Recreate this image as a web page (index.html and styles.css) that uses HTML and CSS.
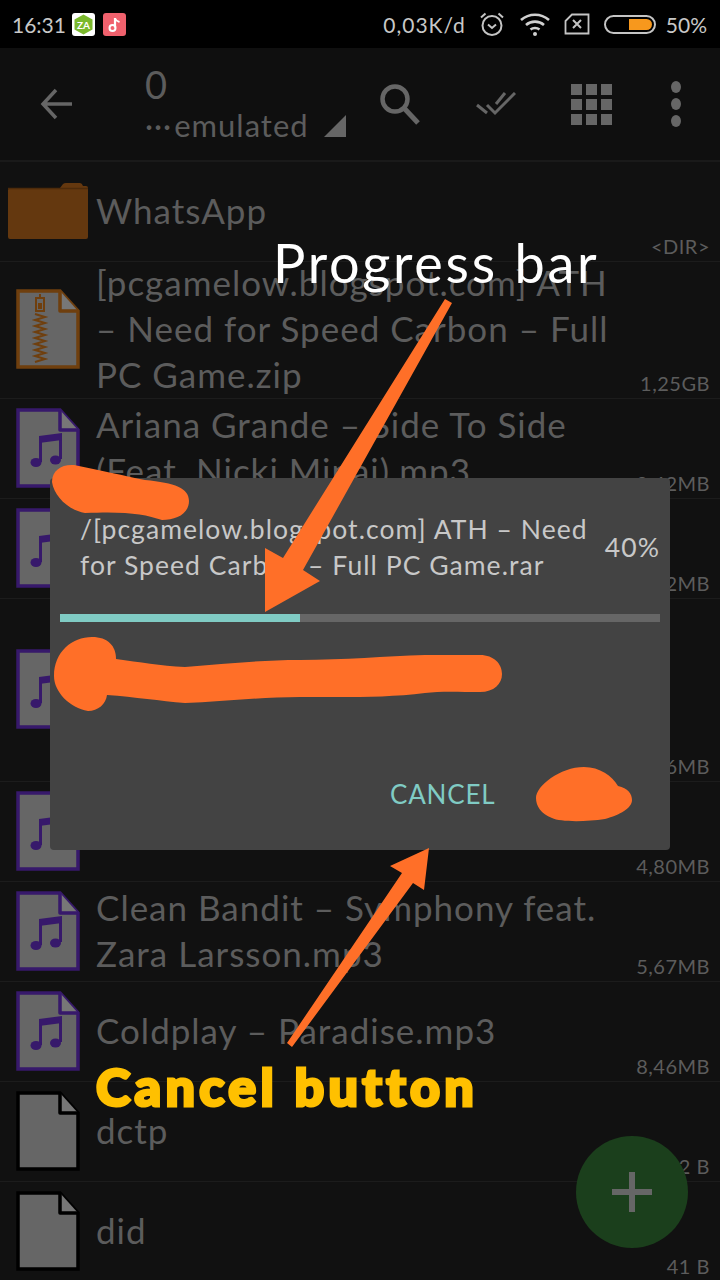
FILE: index.html
```html
<!DOCTYPE html>
<html>

<head>
    <meta charset="UTF-8">
    <title>Files</title>
    <link rel="stylesheet" href="styles.css">
</head>

<body>
    <svg class="defs" width="0" height="0">
        <symbol id="sheet" viewBox="0 0 64 80">
            <path d="M2 2H44L62 22V78H2Z" fill="#666" stroke="currentColor" stroke-width="3.5" />
            <path d="M44 2V22H62" fill="#777" stroke="currentColor" stroke-width="3.5" stroke-linejoin="round" />
        </symbol>
        <symbol id="note" viewBox="0 0 64 80">
            <use href="#sheet" />
            <path d="M24.500 31V54M44.500 29V51" fill="none" stroke="currentColor" stroke-width="3" />
            <path d="M23 28L46 25V32L23 35Z" fill="currentColor" />
            <ellipse cx="20" cy="54.500" rx="5.500" ry="4.500" fill="currentColor" />
            <ellipse cx="39.500" cy="52" rx="5.500" ry="4.500" fill="currentColor" />
        </symbol>
    </svg>

    <header class="status">
        <div class="status-left">
            <span>16:31</span>
            <svg class="app-icon" viewBox="0 0 23 23">
                <rect width="23" height="23" rx="3" fill="#fff" />
                <path d="M11.500 1.500L20.500 6.500V16.500L11.500 21.500L2.500 16.500V6.500Z" fill="#7ab82c" />
                <text x="11.500" y="15.500" class="app-mark">ZA</text>
            </svg>
            <svg class="app-icon" viewBox="0 0 23 23">
                <rect width="23" height="23" rx="3" fill="#f0616d" />
                <path d="M12 5V14.500" stroke="#fff" stroke-width="2.200" fill="none" />
                <path d="M12 5.500C13 8 15 8.500 16.500 9" stroke="#fff" stroke-width="2" fill="none" />
                <circle cx="9.500" cy="15" r="3" fill="none" stroke="#fff" stroke-width="2" />
            </svg>
        </div>
        <div class="status-right">
            <span class="speed">0,03K/d</span>
            <svg class="st-alarm" width="26" height="26" viewBox="0 0 26 26" fill="none" stroke="#c4c4c4" stroke-width="2">
                <circle cx="13" cy="14.500" r="9.500" />
                <path d="M9 13.500L13 17L17 13.500" />
                <path d="M2 6.500L6.500 2.500M24 6.500L19.500 2.500" />
            </svg>
            <svg class="st-wifi" width="32" height="26" viewBox="0 0 32 26" fill="none" stroke="#d0d0d0" stroke-width="2.600">
                <path d="M2 9C10 2 22 2 30 9" />
                <path d="M7 14C12 9.500 20 9.500 25 14" />
                <path d="M11.500 18.500C14 16.500 18 16.500 20.500 18.500" />
                <circle cx="16" cy="23" r="2" fill="#d0d0d0" stroke="none" />
            </svg>
            <svg class="st-sim" width="26" height="22" viewBox="0 0 26 22" fill="none" stroke="#c4c4c4" stroke-width="1.800">
                <path d="M1.500 8L8 1.500H24.500V20.500H1.500Z" />
                <path d="M9 7L17 15M17 7L9 15" stroke-width="2" />
            </svg>
            <div class="battery"><div class="battery-level"></div></div>
            <span>50%</span>
        </div>
    </header>

    <nav class="toolbar">
        <div class="tool tool-back">
            <svg width="32" height="32" viewBox="0 0 32 32" fill="none" stroke="#666" stroke-width="3.500">
                <path d="M32 16H3M16 2L3 16L16 30" />
            </svg>
        </div>
        <div class="path">
            <div class="path-count">0</div>
            <div class="path-name">
                <span class="path-dots">···</span>emulated
                <svg class="path-arrow" width="22" height="22" viewBox="0 0 22 22">
                    <path d="M22 0V22H0Z" fill="#666" />
                </svg>
            </div>
        </div>
        <div class="tool">
            <svg width="42" height="42" viewBox="0 0 42 42" fill="none" stroke="#666">
                <circle cx="16" cy="16" r="12.500" stroke-width="4.500" />
                <path d="M25 25L39 40" stroke-width="5" />
            </svg>
        </div>
        <div class="tool">
            <svg width="40" height="24" viewBox="0 0 40 24" fill="none" stroke="#666" stroke-width="3">
                <path d="M1 13L11 21" />
                <path d="M11 13L19 21L39 1" />
                <path d="M20 12L29 1" />
            </svg>
        </div>
        <div class="tool">
            <div class="grid-icon">
                <i></i><i></i><i></i><i></i><i></i><i></i><i></i><i></i><i></i>
            </div>
        </div>
        <div class="tool tool-more">
            <div class="dots"><i></i><i></i><i></i></div>
        </div>
    </nav>

    <main class="list">
        <div class="row">
            <div class="thumb">
                <svg width="80" height="58" viewBox="0 0 80 58">
                    <path d="M0 8Q0 6 2 6H52L55 2Q56 1 58 1H72Q74 1 75 4H78Q80 4 80 6V55Q80 57 78 57H2Q0 57 0 55Z" fill="#64380f" />
                    <path d="M0 6.500H80" stroke="#4d2b0b" stroke-width="1.500" />
                </svg>
            </div>
            <div class="name">WhatsApp</div>
            <div class="size">&lt;DIR&gt;</div>
        </div>
        <div class="row row-zip">
            <div class="thumb thumb-zip">
                <svg width="64" height="80" viewBox="0 0 64 80">
                    <use href="#sheet" />
                    <path d="M20 9H28V22H20Z" fill="none" stroke="currentColor" stroke-width="2" />
                    <path d="M22 14H26V20H22Z" fill="currentColor" />
                    <path d="M24 5V9M19 25L29 28L19 31L29 34L19 37L29 40L19 43L29 46L19 49L29 52L19 55L29 58L19 61L29 64L19 67L29 70L19 73" fill="none" stroke="currentColor" stroke-width="2" />
                </svg>
            </div>
            <div class="name">[pcgamelow.blogspot.com] ATH<br>– Need for Speed Carbon – Full<br>PC Game.zip</div>
            <div class="size">1,25GB</div>
        </div>
        <div class="row">
            <div class="thumb thumb-music"><svg width="64" height="80"><use href="#note" /></svg></div>
            <div class="name">Ariana Grande – Side To Side<br>(Feat. Nicki Minaj).mp3</div>
            <div class="size">9,42MB</div>
        </div>
        <div class="row">
            <div class="thumb thumb-music"><svg width="64" height="80"><use href="#note" /></svg></div>
            <div class="name"></div>
            <div class="size">3,32MB</div>
        </div>
        <div class="row row-tall">
            <div class="thumb thumb-music"><svg width="64" height="80"><use href="#note" /></svg></div>
            <div class="name"></div>
            <div class="size">7,16MB</div>
        </div>
        <div class="row">
            <div class="thumb thumb-music"><svg width="64" height="80"><use href="#note" /></svg></div>
            <div class="name"></div>
            <div class="size">4,80MB</div>
        </div>
        <div class="row">
            <div class="thumb thumb-music"><svg width="64" height="80"><use href="#note" /></svg></div>
            <div class="name">Clean Bandit – Symphony feat.<br>Zara Larsson.mp3</div>
            <div class="size">5,67MB</div>
        </div>
        <div class="row">
            <div class="thumb thumb-music"><svg width="64" height="80"><use href="#note" /></svg></div>
            <div class="name">Coldplay – Paradise.mp3</div>
            <div class="size">8,46MB</div>
        </div>
        <div class="row">
            <div class="thumb thumb-file"><svg width="64" height="80"><use href="#sheet" /></svg></div>
            <div class="name">dctp</div>
            <div class="size">42 B</div>
        </div>
        <div class="row">
            <div class="thumb thumb-file"><svg width="64" height="80"><use href="#sheet" /></svg></div>
            <div class="name">did</div>
            <div class="size">41 B</div>
        </div>
    </main>

    <div class="fab"><div class="fab-plus"></div></div>

    <section class="dialog">
        <div class="dialog-head">
            <div class="dialog-file">/[pcgamelow.blogspot.com] ATH – Need<br>for Speed Carbon – Full PC Game.rar</div>
            <div class="dialog-pct">40%</div>
        </div>
        <div class="bar"><div class="bar-fill" style="width: 40%"></div></div>
        <div class="dialog-actions"><span class="cancel">CANCEL</span></div>
    </section>

    <svg class="marks" width="720" height="1280" viewBox="0 0 720 1280">
        <path d="M52 482C52 470 62 464 74 465C100 470 125 476 145 480C175 483 189 488 189 501C189 514 176 520 162 520C145 514 125 511 85 513C68 510 54 496 52 482Z" />
        <path d="M54 676C54 652 72 637 92 637C108 637 116 646 116 659C140 662 160 666 185 667C225 664 260 660 300 660C345 660 385 656 425 655H480C494 655 502 664 502 674C502 684 494 692 480 692C460 692 440 691 425 693C385 698 345 697 300 697C260 697 220 702 185 703C160 701 135 697 107 695C106 704 98 711 88 711C70 708 54 692 54 676Z" />
        <path d="M536 798C536 786 560 767 584 767C600 767 612 776 618 786C628 788 632 794 632 800C632 808 620 815 605 819C585 822 560 822 552 818C541 814 536 806 536 798Z" />
        <path d="M445 299L452 303L303 570L320 581L265 612L265 548L283 558Z" />
        <path d="M287 1043L292 1047L413 883L424 890L429 848L390 866L402 873Z" />
    </svg>
    <div class="label label-progress">Progress bar</div>
    <div class="label label-cancel">Cancel button</div>
</body>

</html>
```

FILE: styles.css
```css
html,
body {
    margin: 0;
    height: 1280px;
    overflow: hidden;
    background-color: #111;
}

body {
    position: relative;
    font-family: "Lato", "Noto Sans", sans-serif;
    color: #5c5c5c;
}

.defs {
    position: absolute;
}

/* status bar */
.status {
    height: 48px;
    padding: 0 13px 0 12px;
    box-sizing: border-box;
    display: flex;
    align-items: center;
    justify-content: space-between;
    background: #000;
    color: #c8c8c8;
    font-size: 21px;
}

.status-left {
    display: flex;
    align-items: center;
}

.status-left span {
    width: 60px;
}

.app-icon {
    width: 23px;
    height: 23px;
    margin-right: 8px;
}

.app-mark {
    font-size: 10px;
    font-weight: 700;
    fill: #fff;
    text-anchor: middle;
}

.status-right {
    display: flex;
    align-items: center;
}

.speed {
    letter-spacing: 1px;
}

.st-alarm {
    margin-left: 13px;
}

.st-wifi {
    margin-left: 14px;
}

.st-sim {
    margin-left: 13px;
}

.battery {
    width: 52px;
    height: 19px;
    margin: 0 10px 0 14px;
    padding: 2px;
    box-sizing: border-box;
    display: flex;
    justify-content: flex-end;
    border: 2px solid #c4c4c4;
    border-radius: 10px;
}

.battery-level {
    width: 23px;
    background: #f7981d;
    border-radius: 0 6px 6px 0;
}

/* toolbar */
.toolbar {
    height: 112px;
    display: flex;
    align-items: center;
    background: #0f0f0f;
    border-bottom: 2px solid #1a1a1a;
}

.tool {
    width: 96px;
    display: flex;
    justify-content: center;
}

.tool-back {
    width: 112px;
}

.tool-more {
    width: 72px;
}

.path {
    width: 240px;
    padding-left: 33px;
    box-sizing: border-box;
    margin-top: -4px;
}

.path-count {
    font-size: 38px;
    line-height: 46px;
}

.path-name {
    font-size: 31px;
    line-height: 36px;
    white-space: nowrap;
    letter-spacing: 1px;
}

.path-dots {
    margin-right: 2px;
}

.path-arrow {
    margin-left: 6px;
}

.grid-icon {
    display: grid;
    grid-template-columns: repeat(3, 11px);
    grid-auto-rows: 11px;
    gap: 4px;
    margin-left: -1px;
}

.grid-icon i {
    background: #666;
}

.dots {
    display: flex;
    flex-direction: column;
    gap: 5px;
}

.dots i {
    width: 10px;
    height: 12px;
    border-radius: 50%;
    background: #666;
}

/* file list */
.list {
    display: flex;
    flex-direction: column;
}

.row {
    height: 100px;
    flex: none;
    box-sizing: border-box;
    display: grid;
    grid-template-columns: 96px 1fr auto;
    align-items: center;
    border-bottom: 1px solid #1c1c1c;
}

.row-zip {
    height: 137px;
}

.row-tall {
    height: 183px;
}

.thumb {
    display: flex;
    justify-content: center;
    margin-top: -2px;
    color: #000;
}

.thumb svg {
    display: block;
}

.thumb-zip {
    color: #6f3f0e;
}

.thumb-music {
    color: #37196b;
}

.name {
    font-size: 35px;
    line-height: 46px;
    letter-spacing: 1px;
    white-space: nowrap;
    margin-top: -4px;
    min-width: 0;
}

.size {
    align-self: end;
    font-size: 20px;
    line-height: 24px;
    letter-spacing: 0.5px;
    padding: 0 10px 3px 0;
}

/* floating button */
.fab {
    position: absolute;
    left: 576px;
    top: 1136px;
    width: 112px;
    height: 112px;
    display: flex;
    align-items: center;
    justify-content: center;
    border-radius: 50%;
    background: #1b3f1c;
}

.fab-plus {
    width: 40px;
    height: 40px;
    background:
        linear-gradient(#666, #666) center / 100% 6px no-repeat,
        linear-gradient(#666, #666) center / 6px 100% no-repeat;
}

/* dialog */
.dialog {
    position: absolute;
    left: 50px;
    top: 478px;
    width: 620px;
    height: 372px;
    padding: 33px 10px 0;
    box-sizing: border-box;
    display: flex;
    flex-direction: column;
    background: #434343;
    border-radius: 4px;
    color: #c8c8c8;
}

.dialog-head {
    display: flex;
    align-items: center;
    justify-content: space-between;
    padding-left: 20px;
    font-size: 26.500px;
    line-height: 36px;
    letter-spacing: 1.05px;
}

.dialog-file {
    white-space: nowrap;
}

.bar {
    height: 8px;
    margin-top: 31px;
    background: #666;
}

.bar-fill {
    height: 100%;
    background: #80cbc4;
}

.dialog-actions {
    margin-top: 154px;
    padding-left: 330px;
}

.cancel {
    font-size: 26px;
    line-height: 36px;
    letter-spacing: 0.8px;
    color: #80cbc4;
}

/* annotations drawn on top of the screenshot */
.marks {
    position: absolute;
    left: 0;
    top: 0;
    fill: #ff6f28;
}

.label {
    position: absolute;
    white-space: nowrap;
}

.label-progress {
    left: 273px;
    top: 231px;
    font-size: 54px;
    line-height: 64px;
    letter-spacing: 2.750px;
    color: #fff;
}

.label-cancel {
    left: 96px;
    top: 1054px;
    font-size: 52px;
    line-height: 64px;
    font-weight: 900;
    letter-spacing: 4.300px;
    color: #ffc000;
    -webkit-text-stroke: 3px #ffc000;
    stroke-linejoin: round;
}
```
